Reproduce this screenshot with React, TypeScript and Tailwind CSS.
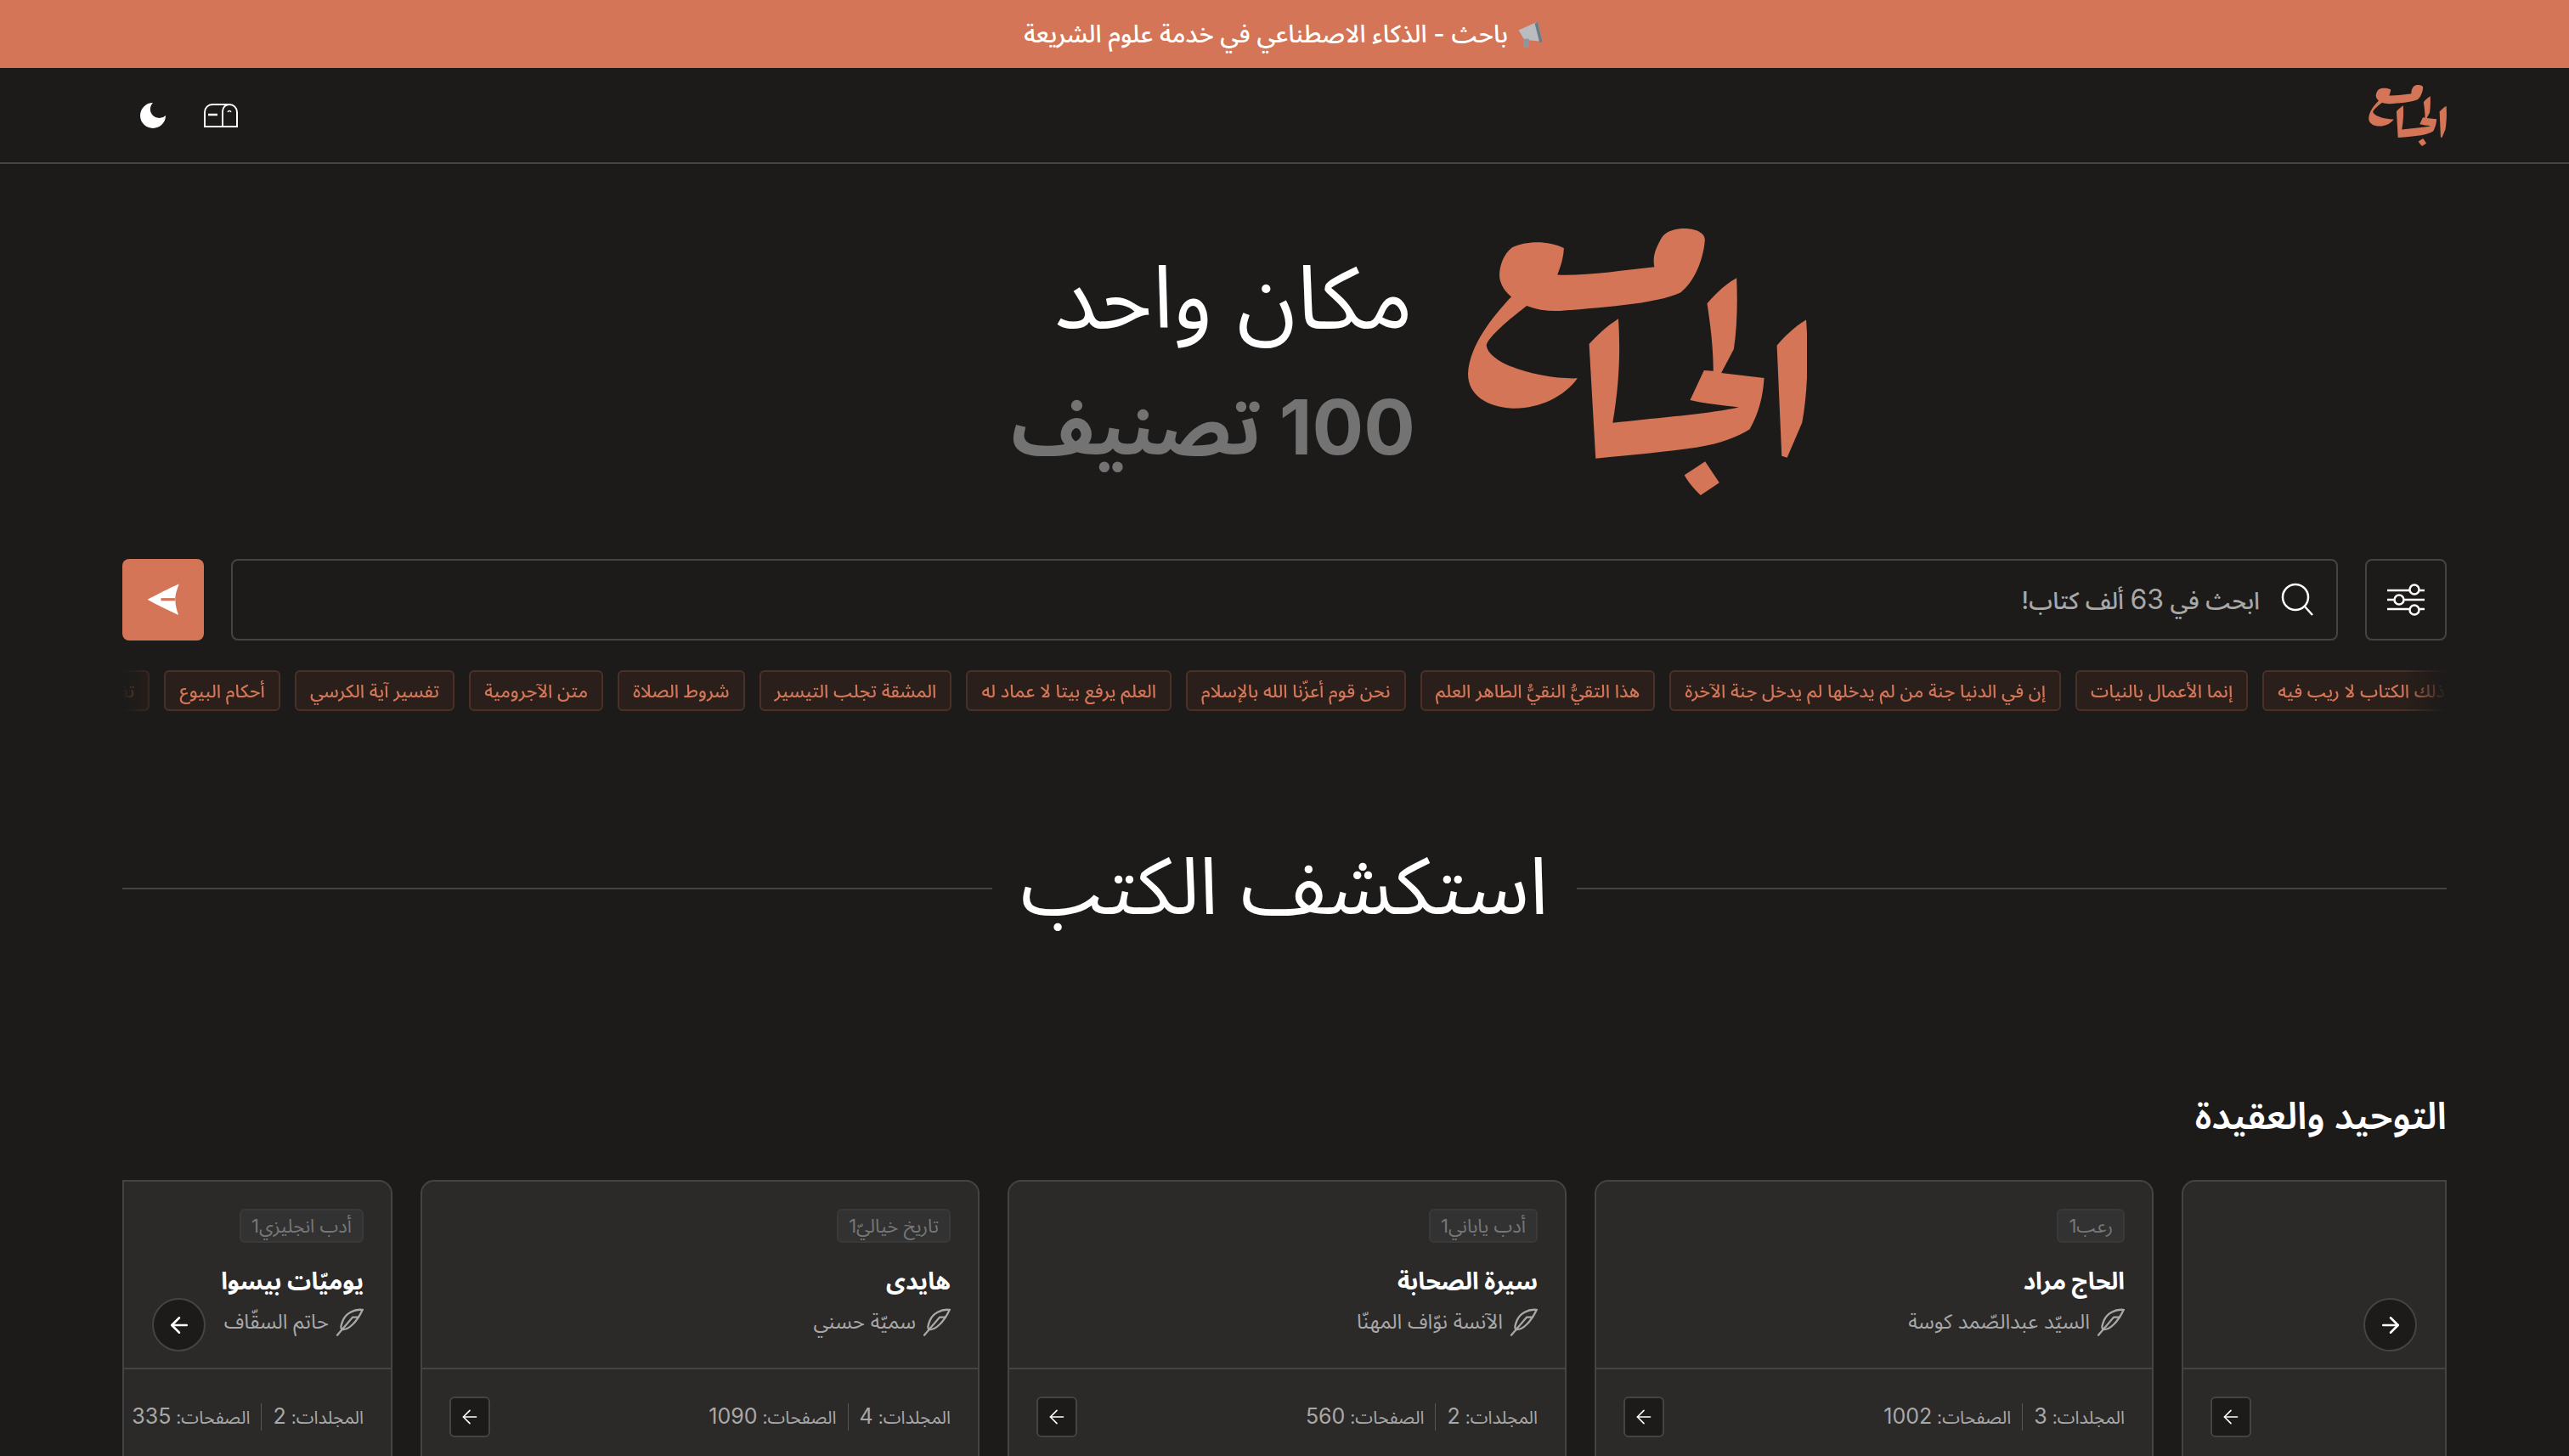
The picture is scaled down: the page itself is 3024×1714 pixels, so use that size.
import React from "react";
import { ArrowLeft, ArrowRight } from "lucide-react";

function Logo({ className }: { className: string }) {
  return (
    <svg className={className} viewBox="55 58 1195 940" fill="#D37556">
      <path d="M393 127C340 100 260 100 210 125C175 150 160 210 168 240C175 265 190 285 208 298C140 370 60 470 55 570C55 650 130 690 220 692C310 692 395 650 441 586C320 590 130 540 120 470C125 440 210 370 262 330C300 345 340 350 380 348C500 338 720 325 805 283C850 250 885 170 890 100C892 70 850 58 820 58C790 58 750 65 735 95C715 130 705 160 712 193C600 205 470 225 370 221C385 185 392 155 393 127Z" />
      <path d="M585 376C540 405 510 435 482 465L505 869C640 855 760 845 860 830C950 815 1010 790 1048 765C1080 710 1095 650 1099 585L948 567L992 483C1005 400 1005 310 1002 232C960 255 925 290 898 322C910 400 920 480 920 560L887 558L838 663C890 675 950 682 1010 688C900 712 720 725 565 743C590 600 592 480 585 376Z" />
      <path d="M1247 380C1205 405 1170 440 1144 470L1161 860L1180 866L1233 742C1255 620 1255 480 1247 380Z" />
      <path d="M818 927L891 879L941 954L875 998C850 975 830 950 818 927Z" />
    </svg>
  );
}

function Feather() {
  return (
    <svg className="w-[33px] h-[33px] shrink-0" viewBox="24 36 100 100" fill="none" stroke="#a8a8a8" strokeWidth="7" strokeLinecap="round">
      <path d="M120 42C90 38 60 55 50 80C42 100 42 105 46 112C70 115 100 85 120 42Z" />
      <path d="M30 132L85 68L106 68" />
    </svg>
  );
}

const tags = [
  "ذلك الكتاب لا ريب فيه",
  "إنما الأعمال بالنيات",
  "إن في الدنيا جنة من لم يدخلها لم يدخل جنة الآخرة",
  "هذا التقيُّ النقيُّ الطاهر العلم",
  "نحن قوم أعزّنا الله بالإسلام",
  "العلم يرفع بيتا لا عماد له",
  "المشقة تجلب التيسير",
  "شروط الصلاة",
  "متن الآجرومية",
  "تفسير آية الكرسي",
  "أحكام البيوع",
  "تفسير",
];

const cards = [
  { tag: "", title: "", author: "", stats: null as null | [string, string] },
  { tag: "رعب1", title: "الحاج مراد", author: "السيّد عبدالصّمد كوسة", stats: ["3", "1002"] as [string, string] },
  { tag: "أدب ياباني1", title: "سيرة الصحابة", author: "الآنسة نوّاف المهنّا", stats: ["2", "560"] as [string, string] },
  { tag: "تاريخ خياليّ1", title: "هايدى", author: "سميّة حسني", stats: ["4", "1090"] as [string, string] },
  { tag: "أدب انجليزي1", title: "يوميّات بيسوا", author: "حاتم السقّاف", stats: ["2", "335"] as [string, string] },
];

export default function App() {
  return (
    <div dir="rtl" className="w-full h-[1714px] overflow-hidden bg-[#1c1b1a] text-white font-['Inter','Noto_Sans_Arabic','DejaVu_Sans',sans-serif]">
      <div className="h-20 bg-[#D37556] flex items-center justify-center gap-2 text-[29px] font-medium">
        <svg className="w-9 h-9" viewBox="0 0 32 32">
          <path d="M4 12L24 3L29 24L10 22Z" fill="#b9bcc0" />
          <path d="M24 3L29 24L26 25L21 5Z" fill="#6f7b84" />
          <rect x="9" y="21" width="6" height="9" fill="#8d969c" />
        </svg>
        <span>باحث - الذكاء الاصطناعي في خدمة علوم الشريعة</span>
      </div>

      <header className="h-[113px] border-b-2 border-[#444444] flex items-center justify-between pr-36 pl-[165px]">
        <Logo className="w-[92px] h-[72px]" />
        <div className="flex items-center gap-[45px]" dir="ltr">
          <svg className="w-[30px] h-[30px]" viewBox="3 3 18 18" fill="white">
            <path d="M12 3a6 6 0 0 0 9 9 9 9 0 1 1-9-9Z" />
          </svg>
          <svg className="w-10 h-7" viewBox="0 0 40 28" fill="none" stroke="white" strokeWidth="2">
            <path d="M1 27V10C1 5 5 1 10 1H30C35 1 39 5 39 10V27Z" />
            <path d="M22 27V9C22 4 26 1 30 1" />
            <path d="M5 13H16" strokeWidth="2.5" />
            <path d="M28 10C29 8 31 8 32 10" strokeWidth="1.5" />
          </svg>
        </div>
      </header>

      <section className="mt-[76px] flex justify-end items-center gap-[65px] pr-[897px] h-[314px]" dir="ltr">
        <div dir="rtl" className="flex flex-col items-start mt-2">
          <div className="text-[103px] leading-[146px] font-normal">مكان واحد</div>
          <div className="text-[90px] leading-[162px] font-bold text-[#737373] -mr-[3px]">100 تصنيف</div>
        </div>
        <Logo className="w-[399px] h-[314px] shrink-0" />
      </section>

      <div className="mt-[75px] px-36 flex gap-8 h-24">
        <button className="w-24 h-24 shrink-0 rounded-[8px] border-2 border-[#444444] flex items-center justify-center">
          <svg className="w-11 h-10" viewBox="0 0 44 40" fill="none" stroke="white" strokeWidth="2.5">
            <path d="M0 9H26M38 9H44M0 20H8M20 20H44M0 31H26M38 31H44" />
            <circle cx="32" cy="8" r="5.5" />
            <circle cx="14" cy="20" r="5.5" />
            <circle cx="32" cy="32" r="5.5" />
          </svg>
        </button>
        <div className="flex-1 h-24 rounded-[8px] border-2 border-[#444444] flex items-center gap-6 pr-[26px]">
          <svg className="w-10 h-10 shrink-0" viewBox="0 0 40 40" fill="none" stroke="white" strokeWidth="2.5">
            <circle cx="18" cy="17" r="15" />
            <path d="M29 28L38 38" />
          </svg>
          <span className="text-[28px] font-medium text-[#a8a8a8]">ابحث في <span className="text-[32px] font-normal">63</span> ألف كتاب!</span>
        </div>
        <button className="w-24 h-24 shrink-0 rounded-[8px] bg-[#D37556] flex items-center justify-center">
          <svg className="w-[44px] h-[40px]" viewBox="30 30 126 126">
            <path d="M35 92C70 75 115 50 152 35C143 60 138 75 138 92C138 110 143 130 150 150C110 130 70 112 35 92Z" fill="white" />
            <path d="M85 92H137" stroke="#D37556" strokeWidth="10" />
          </svg>
        </button>
      </div>

      <div className="mt-[35px] mx-36 h-12 overflow-hidden [mask-image:linear-gradient(to_right,transparent,black_50px,black_calc(100%-50px),transparent)]">
        <div className="flex gap-[17px] -mr-[16px] w-max">
          {tags.map((t) => (
            <span key={t} className="h-12 shrink-0 px-4 flex items-center rounded-[6px] border-2 border-[#4b3027] bg-[#2a1f1a] text-[21.4px] font-medium text-[#D37556] whitespace-nowrap">
              {t}
            </span>
          ))}
        </div>
      </div>

      <div className="mt-36 mx-36 h-[130px] flex items-center gap-[34px]">
        <div className="flex-1 h-0.5 bg-[#444444]" />
        <h2 className="text-[94px] leading-[130px] font-normal whitespace-nowrap -mt-2">استكشف الكتب</h2>
        <div className="flex-1 h-0.5 bg-[#444444]" />
      </div>

      <h3 className="mt-[172px] mx-36 h-[60px] leading-[60px] text-[44px] font-semibold">التوحيد والعقيدة</h3>

      <div className="mt-[46px] mx-36 relative">
        <div className="h-[400px] overflow-hidden border-x-2 border-[#444444]">
          <div className="flex gap-[33px] -mr-[348px] w-max">
            {cards.map((c, i) => (
              <article key={i} className="w-[658px] h-[500px] shrink-0 rounded-[16px] border-2 border-[#444444] bg-[#2b2a29]">
                <div className="h-[221px] border-b-2 border-[#444444] px-8 pt-8">
                  {c.tag && (
                    <>
                      <div className="flex">
                        <span className="h-10 px-3 flex items-center rounded-[6px] border-2 border-[#3a3939] bg-[#333232] text-[22px] text-[#777777]">{c.tag}</span>
                      </div>
                      <div className="mt-[21px] h-12 leading-[48px] text-[28px] font-bold">{c.title}</div>
                      <div className="h-12 flex items-center gap-2 text-[24px] text-[#a8a8a8]">
                        <Feather />
                        <span>{c.author}</span>
                      </div>
                    </>
                  )}
                </div>
                <div className="h-[112px] px-8 flex items-center justify-between">
                  <div className="flex items-center gap-[13px] text-[21px] text-[#a8a8a8] whitespace-nowrap">
                    {c.stats && (
                      <>
                        <span>المجلدات: <span className="text-[25px]">{c.stats[0]}</span></span>
                        <span className="w-px h-8 bg-[#555555]" />
                        <span>الصفحات: <span className="text-[25px]">{c.stats[1]}</span></span>
                      </>
                    )}
                  </div>
                  <button className="w-12 h-12 shrink-0 rounded-[6px] border-2 border-[#444444] bg-[#1c1b1a] flex items-center justify-center">
                    <ArrowLeft size={26} strokeWidth={1.5} color="white" />
                  </button>
                </div>
              </article>
            ))}
          </div>
        </div>
        <button className="absolute top-[139px] right-[35px] w-[63px] h-[63px] rounded-full border-2 border-[#444444] bg-[#1c1b1a] flex items-center justify-center">
          <ArrowRight size={30} strokeWidth={2} color="white" />
        </button>
        <button className="absolute top-[139px] left-[35px] w-[63px] h-[63px] rounded-full border-2 border-[#444444] bg-[#1c1b1a] flex items-center justify-center">
          <ArrowLeft size={30} strokeWidth={2} color="white" />
        </button>
      </div>
    </div>
  );
}
